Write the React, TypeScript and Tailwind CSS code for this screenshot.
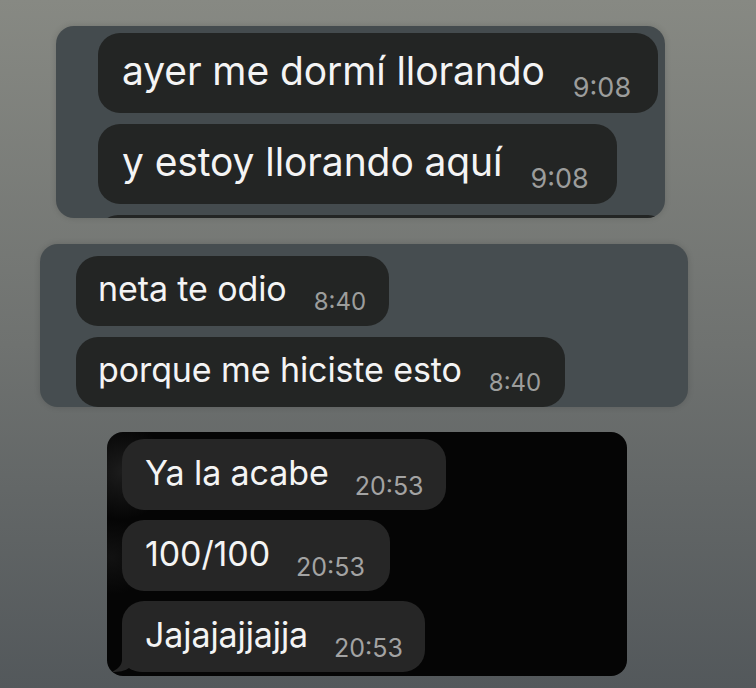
import React from "react";

type Msg = { text: string; time: string; w: number };

const font = { fontFamily: "Inter, 'Noto Sans', sans-serif" };

function Bubble({
  text,
  time,
  w,
  h,
  textCls,
  timeCls,
  bg,
  tail,
  tailFill,
}: Msg & {
  h: string;
  textCls: string;
  timeCls: string;
  bg: string;
  tail?: boolean;
  tailFill?: string;
}) {
  return (
    <div className="relative shrink-0" style={{ width: w }}>
      <div className={`${h} ${bg} rounded-[22px] flex items-start w-full whitespace-nowrap`}>
        <span className={textCls}>{text}</span>
        <span className={timeCls}>{time}</span>
      </div>
      {tail && (
        <svg className="absolute left-[-10px] bottom-0" width="34" height="28" viewBox="0 0 34 28">
          <path
            d="M10 0 L10 16 C10 21 6 25 0 28 C7 28 13 27 17 24 C20 26.5 25 28 34 28 L34 0 Z"
            fill={tailFill}
          />
        </svg>
      )}
    </div>
  );
}

export default function App() {
  const p1: Msg[] = [
    { text: "ayer me dormí llorando", time: "9:08", w: 560 },
    { text: "y estoy llorando aquí", time: "9:08", w: 519 },
  ];
  const p2: Msg[] = [
    { text: "neta te odio", time: "8:40", w: 313 },
    { text: "porque me hiciste esto", time: "8:40", w: 489 },
  ];
  const p3: Msg[] = [
    { text: "Ya la acabe", time: "20:53", w: 324 },
    { text: "100/100", time: "20:53", w: 268 },
    { text: "Jajajajjajja", time: "20:53", w: 303 },
  ];
  return (
    <div
      className="w-[756px] h-[688px] overflow-hidden bg-gradient-to-b from-[#878983] via-[#6f7270] to-[#53585b] flex flex-col"
      style={font}
    >
      {/* Panel 1 */}
      <div className="mt-[26px] ml-[56px] w-[609px] h-[192px] shrink-0 rounded-[18px] bg-[#444b4e] overflow-hidden flex flex-col pl-[42px] pt-[7px] gap-[11px] shadow-[0_0_6px_rgba(0,0,0,0.15)]">
        {p1.map((m, i) => (
          <Bubble
            key={i}
            {...m}
            h="h-[80px]"
            bg="bg-[#232524]"
            textCls="ml-[24px] mt-[18px] text-[39px] leading-none text-[#f4f4f4] tracking-[-0.1px]"
            timeCls="ml-[28px] mt-[41px] text-[27px] leading-none text-[#9c9d9c]"
          />
        ))}
        <div className="h-[20px] w-[570px] shrink-0 bg-[#232524] rounded-t-[22px]" />
      </div>

      {/* Panel 2 */}
      <div className="mt-[26px] ml-[40px] w-[648px] h-[163px] shrink-0 rounded-[18px] bg-[#464d50] overflow-hidden flex flex-col pl-[36px] pt-[12px] gap-[11px] shadow-[0_0_6px_rgba(0,0,0,0.15)]">
        {p2.map((m, i) => (
          <Bubble
            key={i}
            {...m}
            h="h-[70px]"
            bg="bg-[#232524]"
            textCls="ml-[22px] mt-[16px] text-[34px] leading-none text-[#f4f4f4] tracking-[-0.1px]"
            timeCls="ml-[27px] mt-[34px] text-[24px] leading-none text-[#9c9d9c]"
          />
        ))}
      </div>

      {/* Panel 3 */}
      <div className="relative mt-[25px] ml-[107px] w-[520px] h-[244px] shrink-0 rounded-[16px] bg-[#050505] overflow-hidden flex flex-col pl-[15px] pt-[7px] gap-[10px]">
        <div className="absolute left-[-25px] top-[-15px] w-[80px] h-[110px] rounded-full bg-[radial-gradient(circle,rgba(110,110,110,0.22),rgba(0,0,0,0)_70%)]" />
        <div className="absolute left-[-25px] top-[80px] w-[60px] h-[90px] rounded-full bg-[radial-gradient(circle,rgba(90,90,90,0.15),rgba(0,0,0,0)_70%)]" />
        {p3.map((m, i) => (
          <Bubble
            key={i}
            {...m}
            h="h-[71px]"
            bg="bg-[#262626]"
            tail={i === 2}
            tailFill="#262626"
            textCls="relative ml-[23px] mt-[17px] text-[34px] leading-none text-[#f4f4f4] tracking-[-0.1px]"
            timeCls="ml-[26px] mt-[35px] text-[25px] leading-none text-[#a3a3a3]"
          />
        ))}
      </div>
    </div>
  );
}
